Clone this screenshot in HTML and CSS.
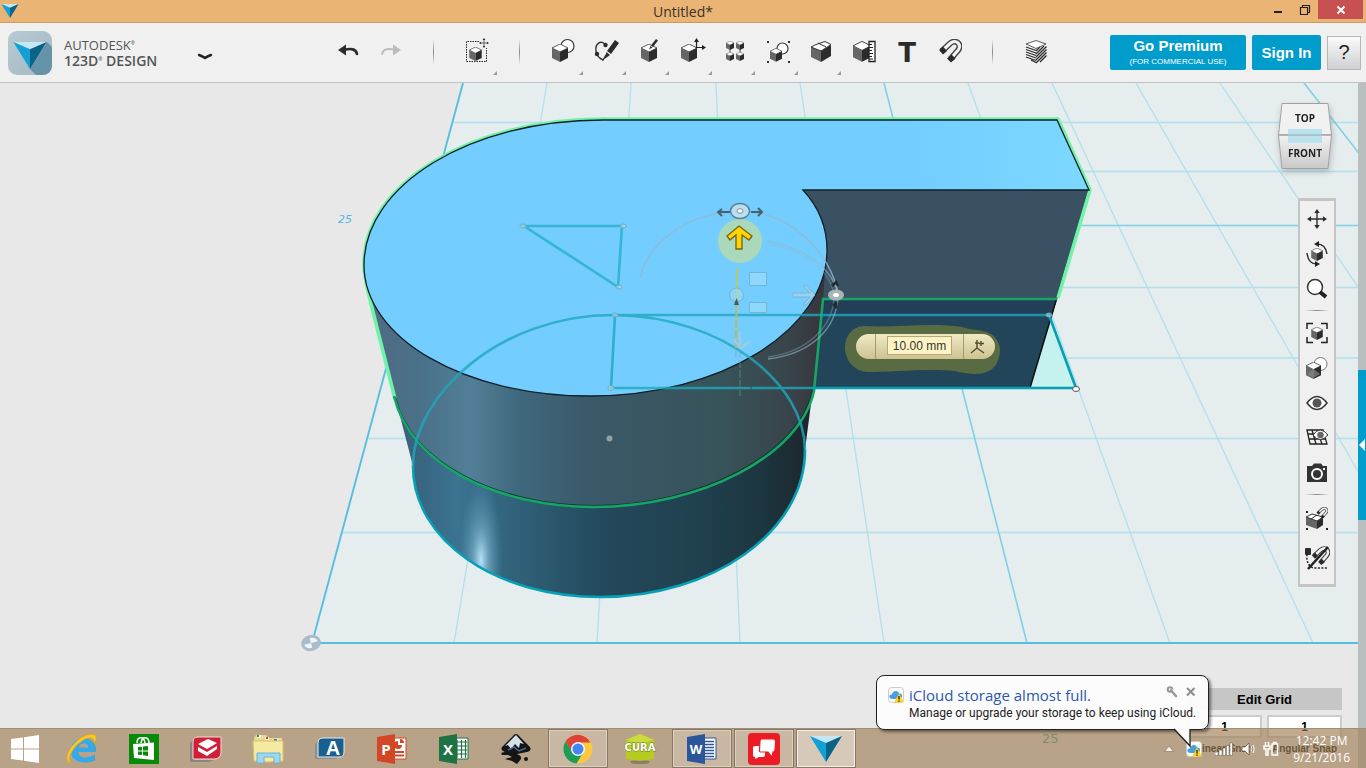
FILE: index.html
```html
<!DOCTYPE html>
<html lang="en">
<head>
    <meta charset="UTF-8">
    <title>Untitled*</title>
    <link rel="stylesheet" href="styles.css">
</head>
<body>

<!-- shared shapes -->
<svg class="defs" width="0" height="0">
    <symbol id="cube" viewBox="0 0 16 18">
        <path d="M8 0L16 4L8 8L0 4Z" fill="#fff" stroke="#333" stroke-width=".8"/>
        <path d="M0 4L8 8V18L0 14Z" fill="#666"/>
        <path d="M16 4L8 8V18L16 14Z" fill="#2b2b2b"/>
    </symbol>
    <symbol id="move" viewBox="0 0 22 22">
        <path d="M11 3V19M3 11H19" stroke="#2b2b2b" stroke-width="1.5"/>
        <path d="M11 0L14 4.500H8ZM11 22L14 17.500H8ZM0 11L4.500 8V14ZM22 11L17.500 8V14Z" fill="#2b2b2b"/>
    </symbol>
    <symbol id="magnet" viewBox="0 0 24 24">
        <path d="M4 12L12 4.500C19 -1 25 7 19 12.500L12.500 20" fill="none" stroke="#444" stroke-width="6"/>
        <path d="M4 12L12 4.500C19 -1 25 7 19 12.500L12.500 20" fill="none" stroke="#f4f4f4" stroke-width="3.200"/>
        <path d="M1 11L5 7.500L9 12L5 15.500ZM9 19.500L13.500 15.500L17.500 19.500L13 23.500Z" fill="#2b2b2b"/>
    </symbol>
    <symbol id="gem" viewBox="0 0 32 26">
        <path d="M0 0L32 0L16 7Z" fill="#c3e7f5"/>
        <path d="M0 0L16 7V26Z" fill="#12a0d6"/>
        <path d="M32 0L16 7V26Z" fill="#0a6387"/>
    </symbol>
    <symbol id="cloud" viewBox="0 0 16 16">
        <rect x=".5" y=".5" width="15" height="15" rx="3" fill="#fbfbfb" stroke="#ccc"/>
        <path d="M4 12C0 11 1 7 4 7.500C4 4 10 2 11 6.500C15 6 15 11 12 12Z" fill="#4a9fe0"/>
        <path d="M11 6.500L16 15.500H6Z" fill="#ffd21e"/>
        <path d="M11 9V12.500M11 13.500V14.700" stroke="#222" stroke-width="1.300"/>
    </symbol>
</svg>

<div class="titlebar">
    <svg class="app-icon" width="18" height="14" viewBox="0 0 32 26"><use href="#gem"/></svg>
    <h1 class="title">Untitled*</h1>
    <div class="win-buttons">
        <button aria-label="Minimize"><svg width="10" height="10"><rect x="1" y="6" width="8" height="2" fill="#222"/></svg></button>
        <button aria-label="Restore"><svg width="12" height="12"><path d="M1.500 3.500H8.500V10.500H1.500ZM3.500 3V1.500H10.500V8.500H9M1 3.500H9" fill="none" stroke="#222" stroke-width="1.200"/></svg></button>
        <button class="close" aria-label="Close"><svg width="10" height="10"><path d="M1.500 1.500L8.500 8.500M8.500 1.500L1.500 8.500" stroke="#fff" stroke-width="2"/></svg></button>
    </div>
</div>

<div class="toolbar">
    <div class="brand">
        <svg width="44" height="44" viewBox="0 0 44 44">
            <defs>
                <linearGradient id="lg" x2="1" y2="1"><stop offset="0" stop-color="#b9cad1"/><stop offset="1" stop-color="#a3b9c5"/></linearGradient>
                <clipPath id="lc"><rect width="44" height="44" rx="9"/></clipPath>
            </defs>
            <rect width="44" height="44" rx="9" fill="url(#lg)"/>
            <path d="M39 11L50 22V50H34L22 38Z" fill="#6593a8" clip-path="url(#lc)"/>
            <use href="#gem" x="5" y="11" width="34" height="27"/>
        </svg>
        <div class="brand-name">
            <span class="maker">AUTODESK<sup>®</sup></span>
            <span class="product">123D<sup>®</sup> DESIGN</span>
        </div>
        <button class="menu" aria-label="Menu"><svg width="16" height="8"><path d="M2 2Q5 3 8 5Q11 3 14 2" fill="none" stroke="#222" stroke-width="2.400" stroke-linecap="round"/></svg></button>
    </div>

    <div class="tools">
        <button aria-label="Undo"><svg width="28" height="28"><path d="M4 12L12 6.500V17.500Z" fill="#2b2b2b"/><path d="M10 12C17 10 22 11 23 16" fill="none" stroke="#2b2b2b" stroke-width="2.600" stroke-linecap="round"/></svg></button>
        <button aria-label="Redo"><svg width="28" height="28"><path d="M24 12L16 6.500V17.500Z" fill="#bbb"/><path d="M18 12C11 10 6 11 5 16" fill="none" stroke="#bbb" stroke-width="2" stroke-linecap="round"/></svg></button>
        <span class="sep"></span>
        <button class="more" aria-label="Transform"><svg width="28" height="28"><path d="M16 3.500H3.500V23.500H23.500V10" fill="none" stroke="#222" stroke-dasharray="1.500 1"/><use href="#cube" x="6" y="9" width="13" height="14"/><use href="#move" x="16" y="0" width="10" height="10"/></svg></button>
        <span class="sep"></span>
        <button class="more" aria-label="Primitives"><svg width="28" height="28"><circle cx="18.500" cy="8" r="6.500" fill="#fff" stroke="#333" stroke-width="1.200"/><use href="#cube" x="3" y="6" width="16" height="18"/></svg></button>
        <button class="more" aria-label="Sketch"><svg width="28" height="28"><path d="M13 6C8 2 3 6 4 13C4 18 7 20 11 22L14 17" fill="none" stroke="#333" stroke-width="1.400"/><circle cx="13.500" cy="7" r="2.200" fill="#2b2b2b"/><circle cx="5" cy="16" r="2.200" fill="#2b2b2b"/><path d="M23 2L27 5L19 16L15 13ZM14.500 14L18 17L12.500 21Z" fill="#2b2b2b"/></svg></button>
        <button class="more" aria-label="Construct"><svg width="28" height="28"><use href="#cube" x="6" y="6" width="16" height="18"/><path d="M21 1L23 2.500L18 9L16 7.500ZM15.500 8L17.500 9.500L14 11.500Z" fill="#2b2b2b"/></svg></button>
        <button class="more" aria-label="Modify"><svg width="28" height="28"><use href="#cube" x="3" y="6" width="16" height="18"/><path d="M18.500 10V3M18.500 9.500H25" stroke="#222" stroke-width="1.200"/><path d="M18.500 0L21 4H16ZM28 9.500L24 7V12Z" fill="#222"/></svg></button>
        <button class="more" aria-label="Pattern"><svg width="28" height="28"><path d="M9 8V20M19 8V20" stroke="#444"/><use href="#cube" x="5" y="3" width="8" height="9"/><use href="#cube" x="15" y="3" width="8" height="9"/><use href="#cube" x="5" y="14" width="8" height="9"/><use href="#cube" x="15" y="14" width="8" height="9"/></svg></button>
        <button class="more" aria-label="Grouping"><svg width="28" height="28"><path d="M3 3H5V5H3ZM24 3H26V5H24ZM3 23H5V25H3ZM24 23H26V25H24Z" fill="#333"/><circle cx="18.500" cy="10.500" r="5.500" fill="#fff" stroke="#333" stroke-width="1.200"/><use href="#cube" x="6" y="10" width="12" height="14"/></svg></button>
        <button class="more" aria-label="Combine"><svg width="28" height="28"><path d="M4 9L14 13V24L4 19Z" fill="#666"/><path d="M14 13L24 7V18L14 24Z" fill="#2b2b2b"/><path d="M4 9L9 6.500L18 3.500L24 6.500L14 13Z" fill="#fff" stroke="#333"/><path d="M11 5L19 9" stroke="#333"/></svg></button>
        <button aria-label="Measure"><svg width="28" height="28"><use href="#cube" x="3" y="3" width="18" height="21"/><path d="M19 3.500H25V23.500H19Z" fill="#fff" stroke="#222" stroke-width="1.300"/><path d="M19 6.500H22M19 9.500H23M19 12.500H22M19 15.500H23M19 18.500H22M19 21H23" stroke="#222"/></svg></button>
        <button aria-label="Text"><svg width="28" height="28"><text x="14" y="24" text-anchor="middle" class="t-icon">T</text></svg></button>
        <button aria-label="Snap"><svg width="28" height="28"><use href="#magnet" x="2" y="1" width="24" height="24"/></svg></button>
        <span class="sep"></span>
        <button aria-label="Material"><svg width="28" height="28"><path d="M4 7L14 10.500V25L4 19ZM24 7L14 10.500V25L24 19Z" fill="#f4f4f4"/><path d="M4 9L14 12.500M4 11.500L14 15M4 14L14 17.500M4 16.500L14 20M4 19L14 22.500M9 22L14 24.500M14 13L18 9M14 16L22 8M14 19L24.500 8.500M14 22L24.500 11.500M14 25L24.500 14.500M18 24L24.500 17.500" stroke="#2b2b2b" stroke-width="1.300"/><path d="M14 2.500L24 6L14 10.500L4 6Z" fill="#fff" stroke="#333" stroke-width=".8"/></svg></button>
    </div>

    <div class="account">
        <button class="blue premium"><b>Go Premium</b><small>(FOR COMMERCIAL USE)</small></button>
        <button class="blue sign"><b>Sign In</b></button>
        <button class="help">?</button>
    </div>
</div>

<div class="stage">
    <svg class="scene" viewBox="0 83 1366 685" preserveAspectRatio="xMinYMin slice">
        <defs>
            <linearGradient id="upper" gradientUnits="userSpaceOnUse" x1="366" x2="826" y1="0" y2="0">
                <stop offset="0" stop-color="#506a83"/><stop offset=".12" stop-color="#4a7189"/><stop offset=".23" stop-color="#517f97"/>
                <stop offset=".33" stop-color="#3f687c"/><stop offset=".5" stop-color="#3a5868"/><stop offset=".78" stop-color="#375359"/>
                <stop offset=".92" stop-color="#38444a"/><stop offset="1" stop-color="#37343b"/>
            </linearGradient>
            <linearGradient id="lower" gradientUnits="userSpaceOnUse" x1="396" x2="806" y1="0" y2="0">
                <stop offset="0" stop-color="#455d74"/><stop offset=".04" stop-color="#38637e"/><stop offset=".15" stop-color="#3b7391"/><stop offset=".3" stop-color="#2f6178"/>
                <stop offset=".5" stop-color="#24495c"/><stop offset=".75" stop-color="#1f404e"/><stop offset=".9" stop-color="#1c353e"/><stop offset="1" stop-color="#1d282e"/>
            </linearGradient>
            <linearGradient id="face" x2="1"><stop offset=".75" stop-color="#73cdff"/><stop offset="1" stop-color="#7dd8ff"/></linearGradient>
            <radialGradient id="shine"><stop offset="0" stop-color="#b3e3fb"/><stop offset=".4" stop-color="#7db3cd" stop-opacity=".6"/><stop offset="1" stop-color="#5a93ae" stop-opacity="0"/></radialGradient>
            <clipPath id="low"><path d="M395 397C410 465 500 507 594 507C700 507 800 455 813 390L805 450C805 532 712 597 601 597C495 597 413 540 413 466Z"/></clipPath>
        </defs>

        <!-- grid -->
        <path d="M312 643L463 83H1366V643Z" fill="#e5edef"/>
        <g fill="none" stroke="#b3e0ea" stroke-width="1.300">
            <path d="M342 532.500H1358M367 438.500H1358M389 358H1358M408 287.500H1358M439 171.500H1358M452 122.500H1358"/>
            <path d="M454 643L547 83M597 643L631 83M740 643L716 83M884 643L800 83M1170 643L968 83M1313 643L1052 83M1456 643L1136 83M1599 643L1220 83"/>
        </g>
        <g fill="none" stroke="#7fd0e8" stroke-width="1.600">
            <path d="M424 225.500H1358M1027 643L884 83M1742 643L1304 83"/>
            <path d="M463 83L312 643H1358" stroke="#55bfe2" stroke-width="1.900"/>
        </g>
        <g transform="rotate(-15 311 643)"><ellipse cx="311" cy="643" rx="10" ry="8" fill="#a9bccb"/><path d="M311 643V638A7 5 0 0 1 318 643ZM311 643V648A7 5 0 0 1 304 643Z" fill="#f2f6f8"/></g>
        <text x="338" y="223" class="ruler slant">25</text>
        <text x="1042" y="743" class="ruler big">25</text>

        <!-- block -->
        <path d="M1030 388L1050 315L1076 388Z" fill="#c5f1ef"/>
        <path d="M803 190H1089L1030 388H800Z" fill="#395162"/>
        <path d="M800 299H1057L1030 388H800Z" fill="#22455a"/>
        <path d="M803 299H1057L1052 315H803Z" fill="#223f57"/>
        <path d="M1089 190L1030 388" stroke="#111" stroke-width="1.500"/>

        <!-- cylinder -->
        <path d="M364 265L395 397L413 466C413 540 495 597 601 597C712 597 805 532 805 450L813 388L600 300Z" fill="url(#lower)"/>
        <g clip-path="url(#low)"><ellipse cx="481" cy="560" rx="22" ry="80" fill="url(#shine)"/></g>
        <path d="M364 265C366 285 368 292 372 305L395 397C410 465 500 507 594 507C700 507 800 455 813 390L823 299L827 250Z" fill="url(#upper)"/>
        <path d="M364 263C364 185 470 119 603 119H1058L1090 190L1058 298M364 263C364 280 368 290 371 304L395 399" fill="none" stroke="#6ff3a8" stroke-width="3.600" stroke-linejoin="round"/>
        <path d="M603 120H1057L1089 190H803C815 203 827 222 827 250C827 331 720 396 590 396C464 396 364 338 364 265C364 185 470 120 603 120Z" fill="url(#face)" stroke="#102027" stroke-width="1.300"/>
        <path d="M395 397C410 464 500 506 594 506C700 506 800 454 813 390" fill="none" stroke="#10362d" stroke-width="2"/>
        <path d="M394 396C410 466 500 507 594 507C700 507 800 456 814 391L823 299H1057" fill="none" stroke="#16a567" stroke-width="2.600"/>

        <!-- sketches -->
        <g fill="none" stroke="#1ea7bd" stroke-width="2.600">
            <path d="M413 466C413 395 500 315 613 315C725 316 805 385 805 450M615 315H1049M615 315L611 388H812" stroke-opacity=".8"/>
            <path d="M805 450C805 532 712 597 601 597C495 597 413 540 413 466M1049 315L1076 388H812" stroke="#06a0b4"/>
            <path d="M524 226H622L618 287Z" stroke="#35b5d4"/>
        </g>
        <g fill="#bcecf5" fill-opacity=".5" stroke="#7da9b9">
            <ellipse cx="523" cy="226" rx="3" ry="2"/><ellipse cx="623" cy="226" rx="3" ry="2"/><ellipse cx="619" cy="287" rx="3" ry="2"/>
            <ellipse cx="615" cy="315" rx="3" ry="2"/><ellipse cx="611" cy="388" rx="3" ry="2.500"/><ellipse cx="1049" cy="315" rx="3" ry="2"/>
            <ellipse cx="1076" cy="389" rx="3.500" ry="2.500" fill="#fff" fill-opacity="1" stroke="#555"/>
        </g>
        <circle cx="609.500" cy="438.500" r="3" fill="#8fa0a6"/>

        <!-- manipulator -->
        <g fill="none" stroke="#94b9cc" stroke-opacity=".8" stroke-width="1.500">
            <path d="M640 278C650 238 692 212 740 211C790 212 828 250 838 292"/>
            <path d="M767 241C805 247 835 270 838 297C836 330 810 354 768 359" stroke-opacity=".6"/>
            <path d="M769 244C802 249 832 270 834 297C833 328 806 352 768 357" stroke-opacity=".35"/>
        </g>
        <circle cx="740" cy="241" r="22" fill="#b4d9ae" fill-opacity=".85"/>
        <path d="M718 212H730M751 212H762M722 209L718 212L722 216M758 208L762 212L758 216" fill="none" stroke="#46606e" stroke-width="2"/>
        <ellipse cx="740" cy="211" rx="9.500" ry="7.500" fill="#b7e0f5" stroke="#60808f" stroke-width="1.500"/>
        <ellipse cx="740" cy="211" rx="3" ry="2.300" fill="#fff" stroke="#888"/>
        <path d="M739 226L752 236L749 240L742 235V249H736V235L730 240L727 236Z" fill="#ffd400" stroke="#746019" stroke-width="1.300"/>
        <path d="M737 268L736 348" stroke="#b9c96a" stroke-width="2"/>
        <path d="M736 300V360M740 350V396" stroke="#8a9a9a" stroke-opacity=".6" stroke-dasharray="8 2"/>
        <circle cx="736.500" cy="295" r="7" fill="#a8dcf4" fill-opacity=".5" stroke="#7fb2c8"/>
        <path d="M734 305L736.500 298L739 305Z" fill="#4c5a5b"/>
        <g fill="#8fd8fb" stroke="#74b3d2"><path d="M749.500 272.500H766.500V285.500H749.500Z"/><path d="M749.500 302.500H766.500V312.500H749.500Z"/></g>
        <path d="M793 293H810L803 285H806L815 295L806 305H803L810 297H793Z" fill="#a6d7ee" stroke="#7eb4d0" fill-opacity=".7"/>
        <path d="M740 332V347M734 340L741 348L750 341" fill="none" stroke="#9fcae0" stroke-width="2.500"/>
        <path d="M739.500 386H751V390M738 400L743 409M742 400H751V407" fill="none" stroke="#3c5155"/>
        <path d="M836 302V308M833 304L837 308M832 286L836 282L838 286" stroke="#222b30" stroke-width="2.500" fill="none"/>
        <ellipse cx="836" cy="295" rx="8" ry="5.500" fill="#a9b6b8"/><ellipse cx="836" cy="295" rx="3" ry="2" fill="#fff"/>
        <path d="M865 326C895 328 930 322 962 327C975 332 996 327 1000 348C1000 378 975 376 955 371C930 368 890 372 868 372C838 370 838 326 865 326Z" fill="#586b42"/>
    </svg>

    <div class="dimension">
        <span class="grip"></span>
        <input type="text" aria-label="Distance" value="10.00 mm">
        <button aria-label="Direction"><svg width="17" height="16"><path d="M8 9V1M8 9L2 14M8 9L15 14M6 4H10M12 2V7M10 4.500H15" fill="none" stroke="#57502f" stroke-width="1.500"/></svg></button>
    </div>

    <svg class="viewcube" width="58" height="72" viewBox="0 0 58 72">
        <defs><linearGradient id="vc" x2="0" y2="1"><stop offset="0" stop-color="#f2f2f2"/><stop offset="1" stop-color="#c9c9c9"/></linearGradient></defs>
        <path d="M5 1.500H51L54.500 33H1.500Z" fill="#f1f1f1" stroke="#a2a2a2"/>
        <path d="M1.500 33H54.500L51 66.500H5Z" fill="url(#vc)" stroke="#a2a2a2"/>
        <rect x="11" y="27" width="34" height="14" fill="#b9e2ef"/>
        <path d="M1.500 33H54.500" stroke="#a2a2a2"/>
        <text x="28" y="20" text-anchor="middle">TOP</text>
        <text x="28" y="55" text-anchor="middle">FRONT</text>
    </svg>

    <div class="navbar">
        <button aria-label="Pan"><svg width="24" height="24"><use href="#move" x="2" y="2" width="20" height="20"/></svg></button>
        <button aria-label="Orbit"><svg width="24" height="24"><use href="#cube" x="6" y="6" width="12" height="13"/><path d="M12 2C18 2 21 5 22 12M12 22C6 22 3 19 2 11" fill="none" stroke="#333" stroke-width="1.500"/><path d="M14 -1V5L9 2ZM10 19V25L15 22Z" fill="#222"/></svg></button>
        <button aria-label="Zoom"><svg width="24" height="24"><circle cx="10" cy="10" r="7.500" fill="#fff" stroke="#333" stroke-width="1.500"/><path d="M15 15L21 20" stroke="#222" stroke-width="4"/></svg></button>
        <hr>
        <button aria-label="Fit"><svg width="24" height="24"><path d="M2 8V2.500H8M16 2.500H22V8M22 16V21.500H16M8 21.500H2V16" fill="none" stroke="#222" stroke-width="1.500"/><use href="#cube" x="6" y="6" width="12" height="13"/></svg></button>
        <button aria-label="Shading"><svg width="24" height="24"><circle cx="15.500" cy="8" r="6.500" fill="#fff" stroke="#777"/><use href="#cube" x="1" y="6" width="15" height="17"/><path d="M8.500 13L15 18L8.500 22L2 18Z" fill="#888" fill-opacity=".7"/></svg></button>
        <button aria-label="Visibility"><svg width="24" height="24"><path d="M2 12Q12 -1 22 12Q12 25 2 12Z" fill="#fff" stroke="#333" stroke-width="1.500"/><circle cx="12" cy="12" r="4.500" fill="#555"/></svg></button>
        <button aria-label="Grid visibility"><svg width="24" height="24"><path d="M2 4H18L22 18H5ZM3 8H19M4 13H20M7 4L11 18M12 4L17 18" fill="none" stroke="#222" stroke-width="1.300"/><path d="M8 9Q15 -1 23 9Q15 18 8 9Z" fill="#fff" stroke="#333"/><circle cx="15.500" cy="9" r="3.200" fill="#666"/></svg></button>
        <button aria-label="Screenshot"><svg width="24" height="24"><path d="M2 5H7L9 2.500H16L18 5H22V21H2Z" fill="#333"/><circle cx="12" cy="13" r="5" fill="#333" stroke="#fff" stroke-width="2"/><rect x="18" y="7" width="2" height="2" fill="#fff"/></svg></button>
        <hr>
        <button class="tall" aria-label="Snap to grid"><svg width="26" height="26"><path d="M2 11L13 15V23L2 19Z" fill="#666"/><path d="M13 15L19 11V19L13 23Z" fill="#2b2b2b"/><path d="M2 11L8 8L19 11L13 15Z" fill="#fff" stroke="#333"/><path d="M7 13L13 9" stroke="#333"/><use href="#magnet" x="12" y="1" width="12" height="12"/><path d="M2 5H4V7H2ZM2 22H4V24H2ZM22 22H24V24H22Z" fill="#222"/></svg></button>
        <button class="tall" aria-label="Snap off"><svg width="26" height="26"><use href="#magnet" x="7" y="1" width="19" height="20"/><path d="M3 9C2 18 6 23 11 23H24" fill="none" stroke="#222" stroke-width="1.500" stroke-dasharray="2 1.500"/><rect x="1" y="3" width="6" height="7" rx="1" fill="#2b2b2b"/><path d="M24 2L4 24" stroke="#222" stroke-width="2.500"/></svg></button>
    </div>

    <div class="gutter"><button aria-label="Open panel"><svg width="8" height="12"><path d="M7 0V12L1 6Z" fill="#fff"/></svg></button></div>

    <div class="snap">
        <button class="edit-grid">Edit Grid</button>
        <div class="snap-field"><input type="text" id="linear" value="1"><label for="linear">Linear Snap</label></div>
        <div class="snap-field"><input type="text" id="angular" value="1"><label for="angular">Angular Snap</label></div>
    </div>
</div>

<div class="taskbar">
    <button class="start" aria-label="Start"><svg width="28" height="28"><path d="M0 4L12 2.500V13.500H0ZM13 2.300L28 0V13.500H13ZM0 14.500H12V25.500L0 24ZM13 14.500H28V28L13 25.700Z" fill="#fff"/></svg></button>
    <button aria-label="Internet Explorer"><svg width="34" height="34"><text x="18" y="30" text-anchor="middle" class="ie">e</text><path d="M4 31C-4 24 12 3 26 2C33 2 32 8 29 12C30 5 24 4 17 9C7 16 2 27 6 31Q5 32 4 31Z" fill="#f6c62d" stroke="#d79b13" stroke-width=".6"/></svg></button>
    <button aria-label="Store"><svg width="30" height="30"><rect width="30" height="30" fill="#078a07"/><path d="M4 10L25 8.500V26L5 24Z" fill="#fff"/><path d="M8 9C8 2 15 2 16 9M12 9C13 1 20 3 20 9" fill="none" stroke="#fff" stroke-width="1.500"/><path d="M9 13L13 12.700V16.500H9ZM14 12.600L19 12V16.500H14ZM9 17.500H13V21L9 20.700ZM14 17.500H19V22L14 21.200Z" fill="#078a07"/></svg></button>
    <button aria-label="SketchBook"><svg width="34" height="28"><path d="M1 8L6 3V25H25L20 27H1Z" fill="#8b8582"/><path d="M9 2H32V17Q32 24 25 24H4V7Q4 2 9 2Z" fill="#d21f38" stroke="#f3d9d9"/><path d="M9 9L19 4L28 8L18 14Z" fill="#fff"/><path d="M9 12L18 17L28 11V14L18 21L9 16" fill="#fff"/></svg></button>
    <button aria-label="File Explorer"><svg width="32" height="32"><path d="M4 2H14L16 5H30V28H2V5Z" fill="#ead98a"/><path d="M5 2H9V5H5ZM13 4H17V7H13ZM22 6H26V9H22Z" fill="#fff"/><path d="M5 2H7V4H5Z" fill="#1fa02a"/><path d="M14 4H16V6H14Z" fill="#d5402b"/><path d="M22 6H25V8H22Z" fill="#3086d5"/><path d="M1 8H31V28Q16 30 2 28Z" fill="#f6e9a2" stroke="#d9c16a"/><path d="M5 30V20H28V30H22V24H12V30Z" fill="#9fd6ef" stroke="#6bb2d6"/></svg></button>
    <button aria-label="Autodesk"><svg width="32" height="28"><path d="M1 9L6 4V22H24L22 24H1Z" fill="#8d8f91"/><path d="M9 3H30V17Q30 22 25 22H4V8Q4 3 9 3Z" fill="#19608f" stroke="#e2ebf0"/><text x="19" y="20" text-anchor="middle" class="a-mark">A</text></svg></button>
    <button aria-label="PowerPoint"><svg width="32" height="32"><path d="M16 5H30V26H16Z" fill="#fff" stroke="#d24726"/><path d="M22 8A4 4 0 1 0 26 12H22Z" fill="#d24726"/><path d="M24 6V10H28A4 4 0 0 0 24 6Z" fill="#d24726"/><path d="M19 19H28M19 22.500H28" stroke="#d24726" stroke-width="2"/><path d="M1 4L19 1V31L1 28Z" fill="#d24726"/><text x="10" y="22" text-anchor="middle" class="office">P</text></svg></button>
    <button aria-label="Excel"><svg width="32" height="32"><path d="M16 5H30V26H16Z" fill="#fff" stroke="#1f7244"/><path d="M19 7V25M23.500 7V25M27.500 7V25M18 9H29M18 13H29M18 17H29M18 21H29" stroke="#1f7244" stroke-width="1.200"/><path d="M1 4L19 1V31L1 28Z" fill="#1f7244"/><text x="10" y="22" text-anchor="middle" class="office">X</text></svg></button>
    <button aria-label="Inkscape"><svg width="32" height="32"><path d="M16 1Q18 1 20 4L29 13Q33 17 27 19L17 21Q22 23 21 26L17 31L12 28L5 26L12 24L8 22H2Q0 19 5 19Q0 17 2 14L13 3Q14 1 16 1Z" fill="#151515"/><path d="M16 2L24 11L20 10L19 15L15 11L11 16L8 12L5 13Z" fill="#d7e1eb"/><path d="M8 17L14 14L19 18L26 15" stroke="#49698c" stroke-width="1.500" fill="none"/><circle cx="26" cy="26" r="2" fill="#151515"/></svg></button>
    <button class="running" aria-label="Chrome"><svg width="30" height="30"><circle cx="15" cy="15" r="14.500" fill="#fbc93d"/><path d="M2.500 7.500A14.500 14.500 0 0 1 27.500 8.500H15L9 18Z" fill="#db4437"/><path d="M2.500 7.500A14.500 14.500 0 0 0 13.500 29.500L20 19H10Z" fill="#1e9d58"/><circle cx="15" cy="15" r="7" fill="#f5f5f5"/><circle cx="15" cy="15" r="5.500" fill="#4285f4"/></svg></button>
    <button aria-label="Cura"><svg width="34" height="32"><ellipse cx="17" cy="29" rx="10" ry="2" fill="#8d7c65"/><path d="M17 1L31 7V26L17 28L3 26V7Z" fill="#b5cc1f"/><path d="M3 7L17 1L31 7L17 10Z" fill="#cbdd3a"/><text x="17" y="18" text-anchor="middle" class="cura">CURA</text></svg></button>
    <button class="running" aria-label="Word"><svg width="32" height="32"><path d="M16 5H30V26H16Z" fill="#fff" stroke="#2b579a"/><path d="M19 8.500H28M19 11.500H28M19 14.500H28M19 17.500H28M19 20.500H28M19 23.500H28" stroke="#2b579a" stroke-width="1.300"/><path d="M1 4L19 1V31L1 28Z" fill="#2b579a"/><text x="10" y="21" text-anchor="middle" class="office word">W</text></svg></button>
    <button class="running" aria-label="Chat"><svg width="32" height="32"><rect width="32" height="32" rx="4" fill="#ec1c24"/><path d="M7 13H15Q17 13 17 15V22Q17 24 15 24H11L7 26V24Q5 24 5 22V15Q5 13 7 13Z" fill="#fff"/><path d="M14 6H25Q28 6 27.500 9L27 17Q27 19 25 19L24 24L20 19H13Q11 19 11.500 17L12 8Q12 6 14 6Z" fill="#fff" stroke="#ec1c24" stroke-width="1.200"/></svg></button>
    <button class="running active" aria-label="123D Design"><svg width="34" height="28"><use href="#gem" x="1" y="1" width="32" height="26"/></svg></button>

    <div class="tray">
        <svg class="arrow" width="10" height="6"><path d="M5 0L9.500 5.500H.5Z" fill="#f4f1ed" stroke="#6c5b46" stroke-width=".5"/></svg>
        <svg width="16" height="16"><use href="#cloud" width="16" height="16"/></svg>
        <svg class="signal" width="18" height="14"><path d="M0 10H3V13.500H0ZM4 8H7V13.500H4ZM8 6H10.500V13.500H8ZM11.500 3.500H14V13.500H11.500ZM15 1H17.500V13.500H15Z" fill="#fff" stroke="#5e503e" stroke-width=".5"/></svg>
        <svg width="14" height="14"><path d="M1 5H4L8 1V13L4 9H1Z" fill="#fff" stroke="#5e503e" stroke-width=".7"/><path d="M10 4Q12 7 10 10M12 3Q14.500 7 12 11" fill="none" stroke="#fff"/></svg>
        <svg width="16" height="16"><path d="M9 3H14.500V14H9ZM10.500 2.500V1.500H13V2.500M2.500 1V4M5.500 1V4M1 5H7V8H5V14H3V8H1Z" fill="none" stroke="#fff" stroke-width="1.500"/></svg>
        <time class="clock">12:42 PM<br>9/21/2016</time>
    </div>
</div>

<div class="balloon">
    <svg class="cloud" width="16" height="16"><use href="#cloud" width="16" height="16"/></svg>
    <div class="balloon-text">
        <h2>iCloud storage almost full.</h2>
        <p>Manage or upgrade your storage to keep using iCloud.</p>
    </div>
    <div class="balloon-tools">
        <button aria-label="Options"><svg width="12" height="12"><path d="M5 4.500L10 10" stroke="#999" stroke-width="2.600" stroke-linecap="round"/><circle cx="4" cy="3.500" r="2.300" fill="none" stroke="#999" stroke-width="2" stroke-dasharray="11 3.500" stroke-dashoffset="-2"/></svg></button>
        <button aria-label="Dismiss"><svg width="10" height="10"><path d="M1 1L8.500 8.500M8.500 1L1 8.500" stroke="#8d8d8d" stroke-width="2"/></svg></button>
    </div>
    <svg class="tail" width="24" height="20"><path d="M2 0L18 18V0Z" fill="#faf8f6"/><path d="M2 1L18 18V1" fill="none" stroke="#222" stroke-width="1.300"/></svg>
</div>

</body>
</html>
```
FILE: styles.css
```css
* {
    margin: 0;
    padding: 0;
    box-sizing: border-box;
}

body {
    display: flex;
    flex-direction: column;
    position: relative;
    height: 100vh;
    overflow: hidden;
    background: #e8e8e8;
    font-family: "Liberation Sans", Arial, sans-serif;
    color: #222;
}

button {
    border: 0;
    background: none;
    font-family: inherit;
    color: inherit;
}

svg {
    display: block;
    flex: none;
}

button svg {
    overflow: visible;
}

.defs {
    position: absolute;
}

/* title bar */
.titlebar {
    display: grid;
    grid-template-columns: 1fr auto 1fr;
    height: 23px;
    flex: none;
    background: #eab475;
    border-bottom: 1px solid #c99c62;
}

.app-icon {
    margin: 4px 0 0 1px;
}

.title {
    font: 14px/23px "Open Sans", sans-serif;
    color: #3c3326;
}

.win-buttons {
    display: flex;
    justify-content: flex-end;
    height: 19px;
    padding-right: 3px;
}

.win-buttons button {
    display: flex;
    align-items: center;
    justify-content: center;
    width: 27px;
}

.win-buttons .close {
    width: 45px;
    background: #c75050;
}

/* toolbar */
.toolbar {
    display: flex;
    height: 60px;
    flex: none;
    padding-right: 5px;
    background: #f0f0f0;
    border-bottom: 1px solid #bfc3c3;
}

.brand {
    display: flex;
    align-items: center;
    width: 326px;
    padding-left: 8px;
}

.brand-name {
    display: flex;
    flex-direction: column;
    width: 120px;
    margin-left: 12px;
    font-family: "Open Sans", sans-serif;
    font-size: 14px;
    line-height: 15px;
    color: #555;
}

.maker {
    font-size: 13px;
}

.brand-name sup {
    font-size: 5px;
    line-height: 5px;
    vertical-align: 5px;
}

.product {
    font-weight: 600;
}

.menu {
    padding: 8px 13px 0;
}

.tools {
    display: flex;
    align-items: center;
    height: 57px;
}

.tools button {
    display: flex;
    align-items: center;
    justify-content: center;
    position: relative;
    width: 43px;
    height: 51px;
}

.tools .more::after {
    content: "";
    position: absolute;
    right: 1px;
    bottom: 2px;
    border: 2px solid transparent;
    border-right-color: #999;
    border-bottom-color: #999;
}

.tools .sep {
    width: 1px;
    height: 26px;
    margin: 0 21px;
    background: linear-gradient(#f0f0f0, #888, #f0f0f0);
}

.t-icon {
    font: bold 26px "DejaVu Sans", sans-serif;
    fill: #2b2b2b;
}

.account {
    display: flex;
    align-items: center;
    gap: 6px;
    margin-left: auto;
}

.blue {
    height: 35px;
    border-radius: 2px;
    background: #009ccc;
    color: #fff;
}

.blue b {
    display: block;
    font-size: 15px;
    line-height: 18px;
}

.blue small {
    display: block;
    font-size: 8px;
    line-height: 14px;
}

.premium {
    width: 136px;
}

.sign {
    width: 69px;
}

.help {
    width: 34px;
    height: 34px;
    border: 1px solid #b5b5b5;
    background: linear-gradient(#fafafa, #cfd0d4);
    font-size: 20px;
}

/* modelling area */
.stage {
    position: relative;
    flex: 1;
    overflow: hidden;
}

.scene {
    width: 100%;
    height: 100%;
}

.ruler {
    font: 13px "DejaVu Sans", sans-serif;
    fill: #30a896;
}

.slant {
    font: italic 11px "DejaVu Sans", sans-serif;
    fill: #4fb9dc;
}

.dimension {
    display: flex;
    align-items: center;
    position: absolute;
    left: 856px;
    top: 251px;
    height: 25px;
    border-radius: 13px;
    background: linear-gradient(#f0e9c4, #cdc391);
}

.grip {
    width: 20px;
    height: 25px;
    border-right: 1px solid #a39b70;
}

.dimension input {
    width: 65px;
    height: 19px;
    margin: 0 11px 2px;
    border: 1px solid #b4a877;
    background: #fdf3c4;
    font: 12px "Liberation Sans", sans-serif;
    text-align: center;
    color: #333;
}

.dimension button {
    width: 32px;
    height: 25px;
    padding-left: 5px;
    border-left: 1px solid #a39b70;
}

.viewcube {
    position: absolute;
    top: 19px;
    right: 31px;
    filter: drop-shadow(1px 3px 3px rgba(0, 0, 0, .2));
}

.viewcube text {
    font: bold 10px "Open Sans", sans-serif;
    fill: #222;
}

.navbar {
    display: flex;
    flex-direction: column;
    position: absolute;
    top: 115px;
    right: 30px;
    width: 38px;
    padding-bottom: 7px;
    border: 2px solid #c4c4c4;
    border-width: 3px 2px;
    background: #f0f0f0;
}

.navbar button {
    display: flex;
    align-items: center;
    justify-content: center;
    height: 35px;
}

.navbar .tall {
    height: 39px;
}

.navbar hr {
    height: 1px;
    margin: 4px 5px;
    border: 0;
    background: linear-gradient(90deg, #f0f0f0, #888, #f0f0f0);
}

.gutter {
    position: absolute;
    top: 0;
    right: 0;
    bottom: 0;
    width: 8px;
    background: #b8bfbe;
}

.gutter button {
    display: flex;
    align-items: center;
    width: 8px;
    height: 150px;
    margin-top: 287px;
    background: #009ccc;
}

.snap {
    display: grid;
    grid-template-columns: 1fr 1fr;
    gap: 5px;
    position: absolute;
    right: 24px;
    bottom: 12px;
    width: 155px;
    font-weight: bold;
}

.edit-grid {
    grid-column: 1 / 3;
    height: 22px;
    background: #c6c6c6;
    font-size: 13px;
    font-weight: bold;
    color: #000;
}

.snap-field input {
    display: block;
    width: 100%;
    height: 23px;
    border: 2px solid #ccc;
    background: #fff;
    font: bold 12px "Liberation Sans", sans-serif;
    text-align: center;
    color: #000;
}

.snap-field label {
    display: block;
    margin-top: 4px;
    font-size: 10px;
    line-height: 14px;
    text-align: center;
    white-space: nowrap;
    color: #000;
}

/* taskbar */
.taskbar {
    display: flex;
    gap: 2px;
    position: absolute;
    left: 0;
    right: 0;
    bottom: 0;
    height: 40px;
    background: rgba(161, 127, 86, .66);
    border-top: 1px solid #a38e73;
}

.taskbar button {
    display: flex;
    align-items: center;
    justify-content: center;
    width: 60px;
}

.taskbar .start {
    width: 50px;
}

.taskbar .running {
    border: 1px solid #887762;
    background: rgba(255, 255, 255, .22);
    box-shadow: inset 0 0 0 1px rgba(255, 255, 255, .35);
}

.taskbar .active {
    background: rgba(255, 255, 255, .42);
    box-shadow: inset 0 0 0 1px #f2eee9;
}

.ie {
    font: bold 43px "DejaVu Sans", sans-serif;
    fill: #36a9e8;
}

.office {
    font: bold 15px "Open Sans", sans-serif;
    fill: #fff;
}

.word {
    font-size: 13px;
}

.a-mark {
    font: bold 20px "Liberation Sans", sans-serif;
    fill: #fff;
}

.cura {
    font: bold 10px "DejaVu Sans", sans-serif;
    fill: #fff;
    stroke: #6d7c2c;
    stroke-width: 1px;
    paint-order: stroke;
}

.tray {
    display: flex;
    align-items: center;
    gap: 8px;
    margin-left: auto;
    padding-right: 16px;
}

.arrow {
    margin-right: 4px;
}

.signal {
    margin-left: 5px;
}

.clock {
    margin-left: 6px;
    font: 12px/17px "Open Sans", sans-serif;
    text-align: center;
    color: #fff;
}

/* notification */
.balloon {
    display: flex;
    position: absolute;
    right: 157px;
    bottom: 38px;
    width: 333px;
    height: 55px;
    padding: 9px 11px 0;
    border: 1px solid #222;
    border-radius: 8px;
    background: rgba(252, 252, 252, .97);
    box-shadow: 2px 2px 3px rgba(0, 0, 0, .45);
}

.cloud {
    margin-top: 2px;
}

.balloon-text {
    margin-left: 5px;
    white-space: nowrap;
}

.balloon-text h2 {
    font: 15px/20px "Open Sans", sans-serif;
    color: #2c57b0;
}

.balloon-text p {
    font: 12px/17px Roboto, sans-serif;
}

.balloon-tools {
    display: flex;
    gap: 8px;
    align-items: center;
    position: absolute;
    top: 10px;
    right: 12px;
}

.tail {
    position: absolute;
    right: 12px;
    top: 52px;
}
```
